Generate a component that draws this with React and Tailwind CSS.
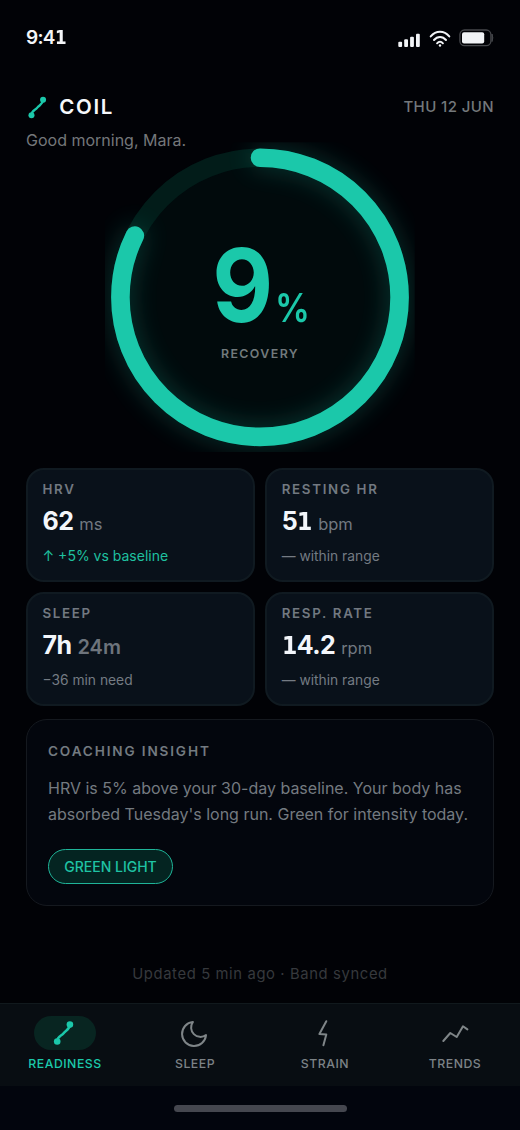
function CoilMark({ className }) {
  return (
    <svg viewBox="0 0 32 34" className={className} fill="none">
      <path d="M8.2 25.5 C8.4 19.8 12.4 20.2 14.6 17.2 S20.4 14 21 8.7" stroke="#1bc8aa" strokeWidth="2.5" />
      <circle cx="8.2" cy="25.5" r="3.3" fill="#1bc8aa" />
      <circle cx="20.9" cy="8.6" r="3.3" fill="#1bc8aa" />
    </svg>
  );
}

function StatusBar() {
  return (
    <div className="flex h-[75px] items-center justify-between pl-[26px] pr-[26.5px]">
      <span className="text-[19px] font-semibold leading-6 tracking-[-0.7px] text-[#f3f5f8]">
        9:4<One />
      </span>
      <div className="flex items-center">
        <svg width="22" height="16" viewBox="0 0 22 16" fill="#f1f3f6" className="mt-[4px]">
          <rect x="0.3" y="9.8" width="3.8" height="5.2" rx="1" />
          <rect x="6.2" y="7.3" width="3.8" height="7.7" rx="1" />
          <rect x="12.1" y="4.7" width="3.8" height="10.3" rx="1" />
          <rect x="18" y="1.7" width="3.8" height="13.3" rx="1" />
        </svg>
        <svg width="22" height="18" viewBox="0 0 22 18" fill="none" stroke="#f1f3f6" strokeWidth="2" strokeLinecap="round" className="ml-[9px] mt-[3px]">
          <path d="M1.7 6.4 C7 0.2 15 0.2 20.3 6.4" />
          <path d="M5 10 C8.4 6 13.6 6 17 10" />
          <path d="M8.1 13.3 C9.8 11.3 12.2 11.3 13.9 13.3" />
          <circle cx="11" cy="15.5" r="1.2" fill="#f1f3f6" stroke="none" />
        </svg>
        <svg width="35" height="18" viewBox="0 0 35 18" fill="none" className="ml-[8px] mt-px">
          <rect x="0.9" y="1" width="31" height="15.6" rx="4.6" stroke="#45474b" strokeWidth="1.3" />
          <rect x="3" y="3.2" width="22.2" height="11.4" rx="2" fill="#f1f3f6" />
          <path d="M33 5 q1.6 3.8 0 7.6z" fill="#45474b" stroke="#45474b" />
        </svg>
      </div>
    </div>
  );
}

function One() {
  return <span className="inline-block w-[0.6em] origin-left scale-x-[0.88] font-['DejaVu_Sans'] font-bold">1</span>;
}

function Ring() {
  return (
    <div className="mx-auto grid h-[310px] w-[310px]">
      <svg width="310" height="310" viewBox="0 0 310 310" fill="none" className="col-start-1 row-start-1">
        <defs>
          <filter id="glow" x="0" y="0" width="310" height="310" filterUnits="userSpaceOnUse">
            <feGaussianBlur stdDeviation="13" />
          </filter>
        </defs>
        <circle cx="155" cy="155.3" r="140" fill="#010a0c" />
        <circle cx="155" cy="155.3" r="139.6" stroke="#021c19" strokeWidth="18.6" />
        <g transform="rotate(-90 155 155.3)" strokeWidth="18.6" strokeLinecap="round" stroke="#1bc8aa">
          <circle cx="155" cy="155.3" r="139.6" pathLength="100" strokeDasharray="82.3 100" filter="url(#glow)" opacity="0.28" />
          <circle cx="155" cy="155.3" r="139.6" pathLength="100" strokeDasharray="82.3 100" />
        </g>
      </svg>
      <div className="col-start-1 row-start-1 flex flex-col items-center pt-[93px]">
        <div className="flex items-baseline text-[#1bc8aa]">
          <span className="ml-[2px] origin-right scale-x-[0.92] text-[102px] font-bold leading-[100px]">9</span>
          <span className="ml-[2px] origin-left scale-x-[0.87] text-[40px] font-semibold leading-10">%</span>
        </div>
        <span className="mt-[11px] text-[12.4px] font-semibold leading-4 tracking-[1.4px] text-[#727a7d]">RECOVERY</span>
      </div>
    </div>
  );
}

function Metric({ label, value, unit, note, good, strongUnit }) {
  return (
    <div className="flex h-[113.5px] flex-col rounded-[18px] border-2 border-[#101a21] bg-[#09111a] pl-[14.5px] pt-[10px]">
      <span className="text-[13.3px] font-semibold leading-[18px] tracking-[1.7px] text-[#727981]">{label}</span>
      <div className="mt-[6px] flex h-[34px] items-baseline gap-[6px] leading-[34px]">
        <span className="text-[25px] font-bold tracking-[-0.6px] text-[#f3f6fb]">{value}</span>
        <span className={strongUnit ? "text-[20px] font-semibold text-[#6d747c]" : "text-[16.5px] text-[#727981]"}>{unit}</span>
      </div>
      <span className={good ? "mt-[8px] h-5 text-[14px] leading-5 text-[#1fc1a0]" : "mt-[8px] h-5 text-[13.8px] leading-5 text-[#747b83]"}>{note}</span>
    </div>
  );
}

function Tab({ label, active, children }) {
  return (
    <div className="flex flex-1 flex-col items-center pt-[12px]">
      <div className={active ? "flex h-[34px] w-[62px] items-center justify-center rounded-full bg-[#082521]" : "flex h-[34px] w-[62px] items-center justify-center pt-[2px]"}>
        {children}
      </div>
      <span className={active ? "mt-[5px] text-[12.3px] font-medium leading-[18px] tracking-[0.5px] text-[#1bc8aa]" : "mt-[5px] text-[12.3px] font-medium leading-[18px] tracking-[0.5px] text-[#7c8286]"}>{label}</span>
    </div>
  );
}

export default function App() {
  return (
    <div className="flex h-[1130px] w-[520px] flex-col overflow-hidden bg-[#010206] font-['Inter',sans-serif]">
      <StatusBar />
      <header className="flex h-[67px] flex-col px-[26px] pt-[18px]">
        <div className="flex h-[28px] items-center">
          <CoilMark className="-ml-[2px] h-[31px] w-[29.2px]" />
          <span className="ml-[6px] text-[20.5px] font-semibold leading-7 tracking-[1.7px] text-[#f6f8fb]">COIL</span>
          <span className="ml-auto text-[15px] font-medium leading-6 tracking-[0.4px] text-[#73787b]">THU 12 JUN</span>
        </div>
        <span className="mt-[7px] text-[16px] leading-6 text-[#74777a]">Good morning, Mara.</span>
      </header>
      <Ring />
      <div className="mx-[26px] mt-[16px] grid grid-cols-2 gap-[10.5px]">
        <Metric label="HRV" value="62" unit="ms" note="↑ +5% vs baseline" good />
        <Metric label="RESTING HR" value={<>5<One /></>} unit="bpm" note="— within range" />
        <Metric label="SLEEP" value="7h" unit="24m" note="−36 min need" strongUnit />
        <Metric label="RESP. RATE" value={<><One />4.2</>} unit="rpm" note="— within range" />
      </div>
      <section className="mx-[26px] mt-[13px] flex h-[187.5px] flex-col items-start rounded-[21px] border border-[#15191f] bg-[#03060d] pl-[21px] pt-[21px]">
        <h2 className="text-[13.6px] font-semibold leading-[20px] tracking-[1.85px] text-[#737a80]">COACHING INSIGHT</h2>
        <p className="mt-[14px] whitespace-nowrap text-[16px] leading-[26px] text-[#747a80]">
          HRV is 5% above your 30-day baseline. Your body has
          <br />
          absorbed Tuesday's long run. Green for intensity today.
        </p>
        <span className="mt-[22px] flex h-[35px] w-[125px] items-center justify-center rounded-full border-[1.4px] border-[#1fb498] bg-[#042421] text-[14px] font-medium text-[#1fc3a4]">GREEN LIGHT</span>
      </section>
      <p className="mt-[56.5px] text-center text-[14.8px] leading-[22px] tracking-[0.62px] text-[#36393d]">Updated 5 min ago · Band synced</p>
      <nav className="mt-auto flex h-[83px] shrink-0 border-t-[1.5px] border-[#11191d] bg-[#080d12]">
        <Tab label="READINESS" active>
          <CoilMark className="h-[34px] w-[32px]" />
        </Tab>
        <Tab label="SLEEP">
          <svg width="32" height="32" viewBox="0 0 24 24" fill="none" stroke="#7f8588" strokeWidth="1.5" strokeLinejoin="round" className="mr-[2px]">
            <path d="M21 12.79A9 9 0 1 1 11.21 3 7 7 0 0 0 21 12.79z" />
          </svg>
        </Tab>
        <Tab label="STRAIN">
          <svg width="32" height="32" viewBox="0 0 32 32" fill="none" stroke="#7f8588" strokeWidth="2" strokeLinecap="round" strokeLinejoin="round">
            <path d="M17.3 3.2 L10.4 16 L17.3 16.4 L14.4 27.3" />
          </svg>
        </Tab>
        <Tab label="TRENDS">
          <svg width="32" height="32" viewBox="0 0 32 32" fill="none" stroke="#7f8588" strokeWidth="2" strokeLinecap="round" strokeLinejoin="round">
            <path d="M4.3 23 L11.3 15 L17.7 19 L24 8.3 L28.4 11.4" />
          </svg>
        </Tab>
      </nav>
      <div className="flex h-[44px] shrink-0 justify-center bg-[#02050d] pt-[19px]">
        <div className="h-[7px] w-[173px] rounded-full bg-[#45474f]" />
      </div>
    </div>
  );
}
